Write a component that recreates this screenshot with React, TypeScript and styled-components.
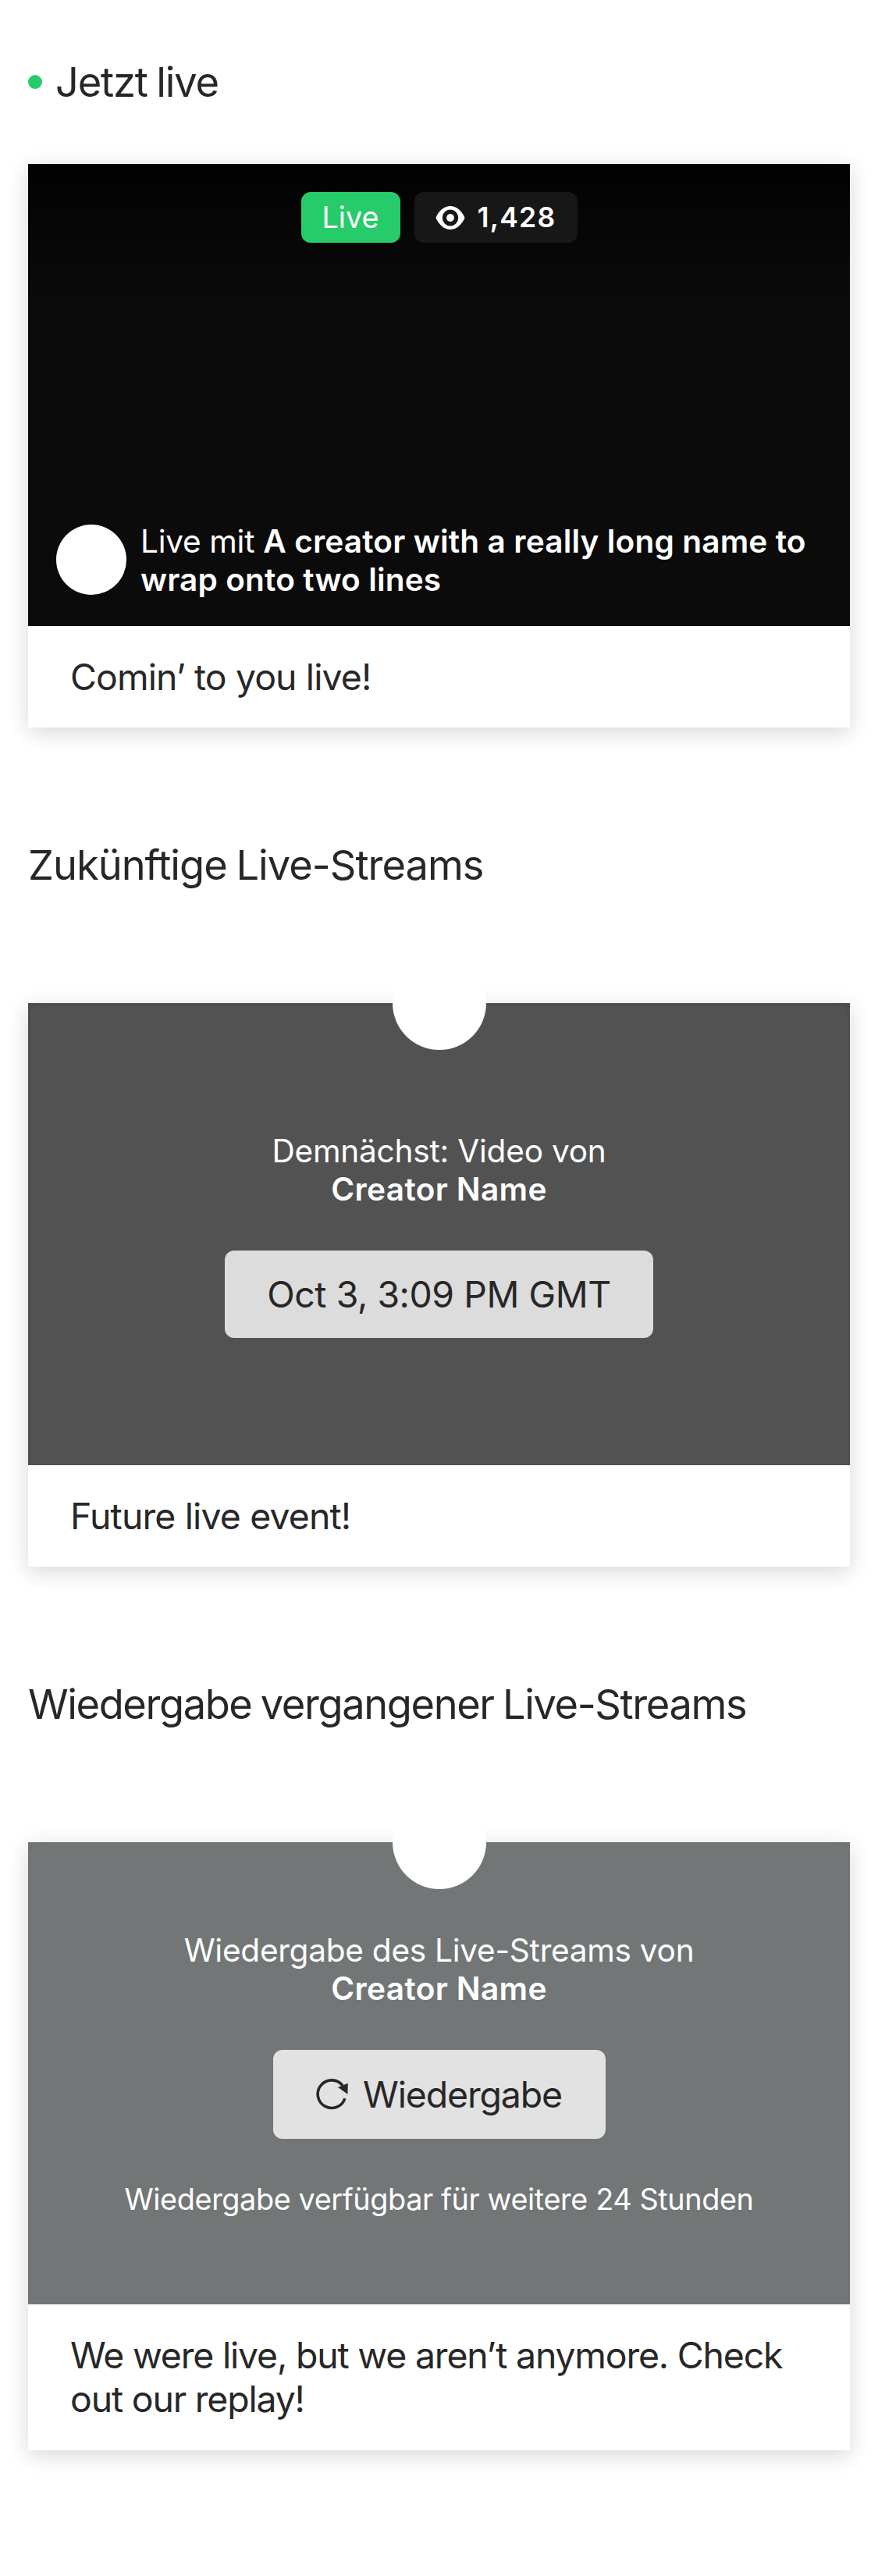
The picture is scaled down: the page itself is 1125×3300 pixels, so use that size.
import React from 'react';
import styled, { createGlobalStyle } from 'styled-components';

const GlobalStyle = createGlobalStyle`
  * { box-sizing: border-box; }
  body {
    margin: 0;
    background: #ffffff;
    color: #272727;
    font-family: Inter, "Liberation Sans", sans-serif;
    -webkit-font-smoothing: antialiased;
  }
`;

const Page = styled.main`
  width: 1125px;
  min-height: 3300px;
  padding: 73px 36px 0;
  display: flex;
  flex-direction: column;
  gap: 144px;
`;

const Section = styled.section<{ $gap: number }>`
  display: flex;
  flex-direction: column;
  gap: ${(p) => p.$gap}px;
`;

const Heading = styled.h2<{ $tracking: number }>`
  margin: 0;
  display: flex;
  align-items: center;
  gap: 17px;
  font-size: 52.4px;
  line-height: 64px;
  font-weight: 400;
  letter-spacing: ${(p) => p.$tracking}px;
  word-spacing: -2px;
  white-space: nowrap;
`;

const LiveDot = styled.span`
  width: 18px;
  height: 18px;
  border-radius: 50%;
  background: #27cc6a;
`;

const Card = styled.article`
  position: relative;
  background: #ffffff;
  box-shadow: 0 6px 26px rgba(0, 0, 0, 0.16);
`;

const Caption = styled.p<{ $tracking: number }>`
  margin: 0;
  padding: 36.75px 54px;
  font-size: 46.4px;
  line-height: 56.5px;
  letter-spacing: ${(p) => p.$tracking}px;
`;

const LiveVideo = styled.div`
  height: 592px;
  padding: 36px 36px 34px;
  display: flex;
  flex-direction: column;
  justify-content: space-between;
  color: #ffffff;
  background: linear-gradient(#020202, #0b0b0b 190px);
  border-bottom: 1px solid #050505;
`;

const Badges = styled.div`
  display: flex;
  justify-content: center;
  gap: 18px;
`;

const Badge = styled.div<{ $live?: boolean }>`
  height: 65px;
  width: ${(p) => (p.$live ? 127 : 209)}px;
  padding: 0 27px;
  display: flex;
  align-items: center;
  gap: 16px;
  border-radius: 12px;
  background: ${(p) => (p.$live ? '#27cc6a' : '#171717')};
  font-size: ${(p) => (p.$live ? 37.8 : 35.5)}px;
  font-weight: ${(p) => (p.$live ? 400 : 600)};
  letter-spacing: ${(p) => (p.$live ? 0 : 1.2)}px;
  line-height: 65px;
`;

const Host = styled.div`
  display: flex;
  align-items: center;
  gap: 18px;
`;

const HostAvatar = styled.div`
  flex: none;
  width: 90px;
  height: 90px;
  margin-bottom: 2px;
  border-radius: 50%;
  background: #ffffff;
`;

const Title = styled.p<{ $tracking: number; $center?: boolean }>`
  margin: 0;
  font-size: 40.6px;
  line-height: 49px;
  letter-spacing: ${(p) => p.$tracking}px;
  text-align: ${(p) => (p.$center ? 'center' : 'left')};
`;

const Name = styled.strong<{ $tracking: number; $block?: boolean }>`
  display: ${(p) => (p.$block ? 'block' : 'inline')};
  font-weight: 600;
  letter-spacing: ${(p) => p.$tracking}px;
`;

const CreatorAvatar = styled.div`
  position: absolute;
  top: -60px;
  left: 50%;
  width: 120px;
  height: 120px;
  margin-left: -60px;
  border-radius: 50%;
  background: #ffffff;
`;

const Frame = styled.div<{ $edge: string }>`
  height: 592px;
  padding: 3px 3px 0;
  background: ${(p) => p.$edge};
`;

const Cover = styled.div<{ $fill: string; $top: number }>`
  height: 589px;
  padding-top: ${(p) => p.$top - 3}px;
  display: flex;
  flex-direction: column;
  align-items: center;
  gap: 54px;
  border-radius: 10px 10px 0 0;
  background: ${(p) => p.$fill};
  color: #ffffff;
`;

const Action = styled.button<{ $width: number; $height: number; $fill: string; $tracking: number }>`
  width: ${(p) => p.$width}px;
  height: ${(p) => p.$height}px;
  padding: 0;
  border: 0;
  border-radius: 12px;
  display: flex;
  align-items: center;
  justify-content: center;
  gap: 18px;
  background: ${(p) => p.$fill};
  color: #272727;
  font-family: inherit;
  font-size: 46.4px;
  letter-spacing: ${(p) => p.$tracking}px;
`;

const Note = styled.p`
  margin: 0;
  font-size: 37.8px;
  line-height: 46px;
  letter-spacing: -0.4px;
`;

const EyeIcon = () => (
  <svg width="38" height="32" viewBox="0 0 38 32" fill="#ffffff">
    <path
      fillRule="evenodd"
      d="M19 1C11.6 1 5.6 6 1.3 13.9C.5 15.3 .5 16.7 1.3 18.1C5.6 26 11.6 31 19 31S32.4 26 36.7 18.1C37.5 16.7 37.5 15.3 36.7 13.9C32.4 6 26.4 1 19 1ZM19 5.5A10.2 10.5 0 1 1 19 26.500A10.2 10.5 0 1 1 19 5.5Z"
    />
    <circle cx="19" cy="16" r="4.9" />
  </svg>
);

const ReplayIcon = () => (
  <svg width="42" height="42" viewBox="0 0 42 42" fill="none">
    <path d="M36.9 26.2A17.8 17.8 0 1 1 34 9.7" stroke="#272727" strokeWidth="3.6" />
    <path d="M40.8 6.7L28 12L40.4 20.8Z" fill="#272727" />
  </svg>
);

export default function App() {
  return (
    <>
      <GlobalStyle />
      <Page>
        <Section $gap={73}>
          <Heading $tracking={-1.2}>
            <LiveDot />
            Jetzt live
          </Heading>
          <Card>
            <LiveVideo>
              <Badges>
                <Badge $live>Live</Badge>
                <Badge>
                  <EyeIcon />
                  1,428
                </Badge>
              </Badges>
              <Host>
                <HostAvatar />
                <Title $tracking={-0.3}>
                  Live mit <Name $tracking={0.13}>A creator with a really long name to wrap onto two lines</Name>
                </Title>
              </Host>
            </LiveVideo>
            <Caption $tracking={-0.89}>Comin’ to you live!</Caption>
          </Card>
        </Section>

        <Section $gap={145}>
          <Heading $tracking={-1}>Zukünftige Live-Streams</Heading>
          <Card>
            <Frame $edge="#4d4d4d">
              <Cover $fill="#525252" $top={165}>
                <Title $center $tracking={-0.22}>
                  Demnächst: Video von
                  <Name $block $tracking={0.35}>Creator Name</Name>
                </Title>
                <Action $width={549} $height={112} $fill="#dcdcdc" $tracking={-0.44}>
                  Oct 3, 3:09 PM GMT
                </Action>
              </Cover>
            </Frame>
            <CreatorAvatar />
            <Caption $tracking={-0.85}>Future live event!</Caption>
          </Card>
        </Section>

        <Section $gap={145}>
          <Heading $tracking={-1.4}>Wiedergabe vergangener Live-Streams</Heading>
          <Card>
            <Frame $edge="#6f7373">
              <Cover $fill="#727676" $top={114}>
                <Title $center $tracking={-0.27}>
                  Wiedergabe des Live-Streams von
                  <Name $block $tracking={0.35}>Creator Name</Name>
                </Title>
                <Action $width={426} $height={114} $fill="#e2e2e2" $tracking={-1.12}>
                  <ReplayIcon />
                  Wiedergabe
                </Action>
                <Note>Wiedergabe verfügbar für weitere 24 Stunden</Note>
              </Cover>
            </Frame>
            <CreatorAvatar />
            <Caption $tracking={-1.18}>We were live, but we aren’t anymore. Check out our replay!</Caption>
          </Card>
        </Section>
      </Page>
    </>
  );
}
